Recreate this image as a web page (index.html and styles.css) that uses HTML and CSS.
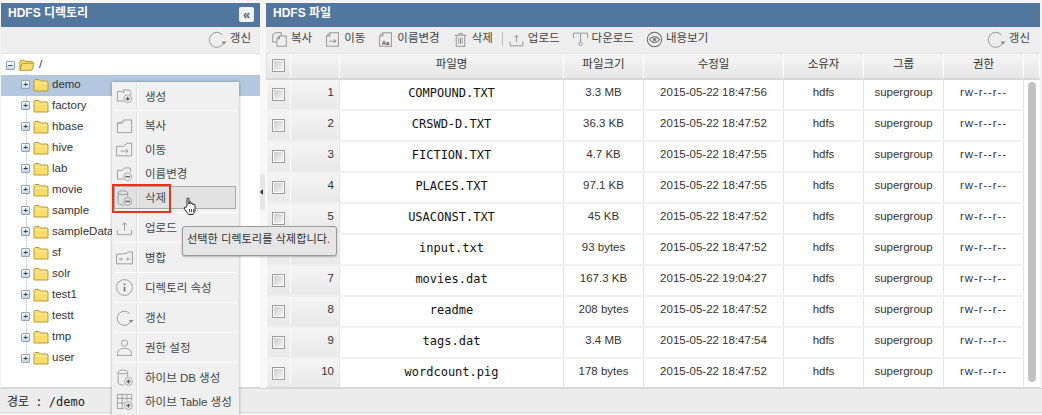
FILE: index.html
```html
<!DOCTYPE html>
<html lang="ko">
<head>
<meta charset="utf-8">
<title>HDFS</title>
<link rel="stylesheet" href="styles.css">
</head>
<body>
<svg class="defs" width="0" height="0">
  <defs>
    <symbol id="refresh" viewBox="0 0 20 20"><path d="M15.5 6A7.5 7.5 0 1 0 17 13" /><path d="M14.5 12.5h5l-2.500 3z" class="fill"/></symbol>
    <symbol id="fplus" viewBox="0 0 24 24"><path d="M3 19V7h6l2 2V5h7l2 3v3M3 19h8"/><circle cx="16" cy="16" r="5" class="soft"/><path d="M13.500 16h5M16 13.500v5" class="bold"/></symbol>
    <symbol id="folder" viewBox="0 0 24 24"><path d="M3 21V9l5-1 3-3h10v16z"/><path d="M3 9h6l3-3"/></symbol>
    <symbol id="fmove" viewBox="0 0 24 24"><path d="M2 20V8h9l4-4h6v16z"/><path d="M7 14h9M13.500 11.500l3 2.500-3 2.500"/></symbol>
    <symbol id="fminus" viewBox="0 0 24 24"><path d="M3 19V8h6l3-3h7l1 5M3 19h8"/><circle cx="16" cy="16" r="5" class="soft"/><path d="M13 16h6" class="bold"/></symbol>
    <symbol id="dbminus" viewBox="0 0 24 24"><ellipse cx="10" cy="6" rx="6" ry="2.500"/><path d="M4 6v13c0 1.500 3 2.500 7 2.500M16 6v5"/><circle cx="16" cy="17" r="5" class="soft"/><path d="M13 17h6" class="bold"/></symbol>
    <symbol id="dbplus" viewBox="0 0 24 24"><ellipse cx="10" cy="5" rx="6" ry="2.500"/><path d="M4 5v14c0 1.500 3 2.500 7 2.500M16 5v6"/><circle cx="17" cy="17" r="5" class="soft"/><path d="M14.500 17h5M17 14.500v5" class="bold"/></symbol>
    <symbol id="upload" viewBox="0 0 24 24"><path d="M3 15v6h18v-6"/><path d="M12 16V6M9 9l3-3 3 3"/></symbol>
    <symbol id="download" viewBox="0 0 24 24"><path d="M2 10V3h20v7"/><path d="M12 4v12"/><circle cx="12" cy="18" r="2.500"/></symbol>
    <symbol id="merge" viewBox="0 0 24 24"><path d="M2 20V8l12-1 3-2h5v15z"/><path d="M5 14h4M15 14h4M7.500 12l2 2-2 2M16.500 12l-2 2 2 2"/></symbol>
    <symbol id="info" viewBox="0 0 24 24"><circle cx="12" cy="12" r="10"/><path d="M12 11v6" class="bold"/><path d="M12 7v2" class="bold"/></symbol>
    <symbol id="person" viewBox="0 0 24 24"><circle cx="12" cy="6.500" r="4"/><path d="M3 22c0-7 4-9 9-9s9 2 9 9z"/></symbol>
    <symbol id="gridplus" viewBox="0 0 24 24"><path d="M3 3h18v8M3 3v18h8M3 8h18M3 14h9M9 3v18M15 3v8"/><circle cx="17" cy="17" r="5" class="soft"/><path d="M14.500 17h5M17 14.500v5" class="bold"/></symbol>
    <symbol id="copy" viewBox="0 0 20 20"><path d="M6 13H2V5l3-3h7v4"/><path d="M7 18V9l3-3h8v12z"/><path d="M7 9h3V6"/></symbol>
    <symbol id="fileto" viewBox="0 0 20 20"><path d="M3 18V6l4-4h10v16z"/><path d="M3 6h4V2M6 12h8M11.500 10l2.500 2-2.500 2"/></symbol>
    <symbol id="fileaa" viewBox="0 0 20 20"><path d="M3 18V6l4-4h10v16z"/><path d="M3 6h4V2"/><text x="5.500" y="16" class="aa">Aa</text></symbol>
    <symbol id="trash" viewBox="0 0 20 20"><path d="M3 5h14M8 5V3h4v2M5 5v13h10V5M8 8v7M10 8v7M12 8v7"/></symbol>
    <symbol id="eye" viewBox="0 0 20 20"><circle cx="10" cy="10" r="8.500"/><path d="M4 10c3-4.500 9-4.500 12 0-3 4.500-9 4.500-12 0z"/><circle cx="10" cy="10" r="2.200" class="fill"/></symbol>
    <symbol id="tfolder" viewBox="0 0 16 14"><path d="M1 13V2.500L2 1.500h4l1.500 1.500H14l1 1v9z" class="yellow"/><path d="M2 5h12" class="yline"/></symbol>
    <symbol id="topen" viewBox="0 0 18 14"><path d="M1 13V2.500L2 1.500h4l1.500 1.500H15v2" class="yellow"/><path d="M1 13l2.500-8H17l-2.500 8z" class="yellow"/></symbol>
    <symbol id="cursor" viewBox="0 0 16 20"><path d="M5 10V3c0-1.500 2-1.500 2 0v5V6.500c0-1 2-1 2 0V8c0-1 2-1 2 0v1c0-1 2-1 2 0v5c0 2-1 3-2 4.500H6.500L2.500 13c-1-1.500.5-2.500 1.500-1.500z" class="hand"/><path d="M7.500 13v3M9.500 13v3M11.500 13v3" class="handl"/></symbol>
  </defs>
</svg>

<div class="app">
  <div class="panes">
    <section class="pane left">
      <header class="head"><h2>HDFS 디렉토리</h2><button class="collapse" type="button">«</button></header>
      <div class="tools end"><span class="tool"><svg class="ic i20"><use href="#refresh"/></svg>갱신</span></div>
      <div class="tree">
        <div class="root"><span class="pm">−</span><svg class="openf"><use href="#topen"/></svg><span>/</span></div>
        <ul>
          <li class="on"><span class="pm">+</span><svg class="fold"><use href="#tfolder"/></svg>demo</li>
          <li><span class="pm">+</span><svg class="fold"><use href="#tfolder"/></svg>factory</li>
          <li><span class="pm">+</span><svg class="fold"><use href="#tfolder"/></svg>hbase</li>
          <li><span class="pm">+</span><svg class="fold"><use href="#tfolder"/></svg>hive</li>
          <li><span class="pm">+</span><svg class="fold"><use href="#tfolder"/></svg>lab</li>
          <li><span class="pm">+</span><svg class="fold"><use href="#tfolder"/></svg>movie</li>
          <li><span class="pm">+</span><svg class="fold"><use href="#tfolder"/></svg>sample</li>
          <li><span class="pm">+</span><svg class="fold"><use href="#tfolder"/></svg>sampleData</li>
          <li><span class="pm">+</span><svg class="fold"><use href="#tfolder"/></svg>sf</li>
          <li><span class="pm">+</span><svg class="fold"><use href="#tfolder"/></svg>solr</li>
          <li><span class="pm">+</span><svg class="fold"><use href="#tfolder"/></svg>test1</li>
          <li><span class="pm">+</span><svg class="fold"><use href="#tfolder"/></svg>testt</li>
          <li><span class="pm">+</span><svg class="fold"><use href="#tfolder"/></svg>tmp</li>
          <li><span class="pm">+</span><svg class="fold"><use href="#tfolder"/></svg>user</li>
        </ul>
      </div>
    </section>
    <div class="split"><span class="grip"></span></div>
    <section class="pane right">
      <header class="head"><h2>HDFS 파일</h2></header>
      <div class="tools">
        <span class="tool"><svg class="ic i17"><use href="#copy"/></svg>복사</span>
        <span class="tool"><svg class="ic i17"><use href="#fileto"/></svg>이동</span>
        <span class="tool"><svg class="ic i17"><use href="#fileaa"/></svg>이름변경</span>
        <span class="tool"><svg class="ic i17"><use href="#trash"/></svg>삭제</span>
        <span class="bar"></span>
        <span class="tool"><svg class="ic i17"><use href="#upload"/></svg>업로드</span>
        <span class="tool"><svg class="ic i17"><use href="#download"/></svg>다운로드</span>
        <span class="tool"><svg class="ic i17 dark"><use href="#eye"/></svg>내용보기</span>
        <span class="tool push"><svg class="ic i20"><use href="#refresh"/></svg>갱신</span>
      </div>
      <div class="grid-wrap">
        <table class="grid">
          <colgroup><col class="c-chk"><col class="c-no"><col class="c-name"><col class="c-size"><col class="c-date"><col class="c-own"><col class="c-grp"><col class="c-perm"><col class="c-sb"></colgroup>
          <thead><tr><th><span class="cb"></span></th><th></th><th>파일명</th><th>파일크기</th><th>수정일</th><th>소유자</th><th>그룹</th><th>권한</th><th></th></tr></thead>
          <tbody>
            <tr><td class="g"><span class="cb"></span></td><td class="g no">1</td><td class="fn">COMPOUND.TXT</td><td>3.3 MB</td><td>2015-05-22 18:47:56</td><td>hdfs</td><td>supergroup</td><td>rw-r--r--</td><td class="sb" rowspan="10"><span class="thumb"></span></td></tr>
            <tr><td class="g"><span class="cb"></span></td><td class="g no">2</td><td class="fn">CRSWD-D.TXT</td><td>36.3 KB</td><td>2015-05-22 18:47:52</td><td>hdfs</td><td>supergroup</td><td>rw-r--r--</td></tr>
            <tr><td class="g"><span class="cb"></span></td><td class="g no">3</td><td class="fn">FICTION.TXT</td><td>4.7 KB</td><td>2015-05-22 18:47:55</td><td>hdfs</td><td>supergroup</td><td>rw-r--r--</td></tr>
            <tr><td class="g"><span class="cb"></span></td><td class="g no">4</td><td class="fn">PLACES.TXT</td><td>97.1 KB</td><td>2015-05-22 18:47:55</td><td>hdfs</td><td>supergroup</td><td>rw-r--r--</td></tr>
            <tr><td class="g"><span class="cb"></span></td><td class="g no">5</td><td class="fn">USACONST.TXT</td><td>45 KB</td><td>2015-05-22 18:47:52</td><td>hdfs</td><td>supergroup</td><td>rw-r--r--</td></tr>
            <tr><td class="g"><span class="cb"></span></td><td class="g no">6</td><td class="fn">input.txt</td><td>93 bytes</td><td>2015-05-22 18:47:52</td><td>hdfs</td><td>supergroup</td><td>rw-r--r--</td></tr>
            <tr><td class="g"><span class="cb"></span></td><td class="g no">7</td><td class="fn">movies.dat</td><td>167.3 KB</td><td>2015-05-22 19:04:27</td><td>hdfs</td><td>supergroup</td><td>rw-r--r--</td></tr>
            <tr><td class="g"><span class="cb"></span></td><td class="g no">8</td><td class="fn">readme</td><td>208 bytes</td><td>2015-05-22 18:47:52</td><td>hdfs</td><td>supergroup</td><td>rw-r--r--</td></tr>
            <tr><td class="g"><span class="cb"></span></td><td class="g no">9</td><td class="fn">tags.dat</td><td>3.4 MB</td><td>2015-05-22 18:47:54</td><td>hdfs</td><td>supergroup</td><td>rw-r--r--</td></tr>
            <tr><td class="g"><span class="cb"></span></td><td class="g no">10</td><td class="fn">wordcount.pig</td><td>178 bytes</td><td>2015-05-22 18:47:52</td><td>hdfs</td><td>supergroup</td><td>rw-r--r--</td></tr>
          </tbody>
        </table>
      </div>
    </section>
  </div>
  <footer class="status">경로 : /demo</footer>

  <nav class="menu">
    <div class="mi first"><svg class="mic"><use href="#fplus"/></svg><span>생성</span></div>
    <hr>
    <div class="group">
      <div class="mi"><svg class="mic"><use href="#folder"/></svg><span>복사</span></div>
      <div class="mi"><svg class="mic"><use href="#fmove"/></svg><span>이동</span></div>
      <div class="mi"><svg class="mic"><use href="#fminus"/></svg><span>이름변경</span></div>
      <div class="mi hover"><svg class="mic"><use href="#dbminus"/></svg><span>삭제</span></div>
    </div>
    <hr>
    <div class="mi solo"><svg class="mic"><use href="#upload"/></svg><span>업로드</span></div>
    <hr>
    <div class="mi solo"><svg class="mic"><use href="#merge"/></svg><span>병합</span></div>
    <hr>
    <div class="mi solo"><svg class="mic"><use href="#info"/></svg><span>디렉토리 속성</span></div>
    <hr>
    <div class="mi solo"><svg class="mic"><use href="#refresh"/></svg><span>갱신</span></div>
    <hr>
    <div class="mi solo"><svg class="mic"><use href="#person"/></svg><span>권한 설정</span></div>
    <hr>
    <div class="group last">
      <div class="mi"><svg class="mic"><use href="#dbplus"/></svg><span>하이브 DB 생성</span></div>
      <div class="mi"><svg class="mic"><use href="#gridplus"/></svg><span>하이브 Table 생성</span></div>
    </div>
  </nav>
  <div class="redbox"></div>
  <svg class="cursor"><use href="#cursor"/></svg>
  <div class="tip">선택한 디렉토리를 삭제합니다.</div>
</div>
</body>
</html>
```
FILE: styles.css
```css
* { box-sizing: border-box; }
html, body { margin: 0; padding: 0; }
body {
  width: 1042px; height: 415px; overflow: hidden; background: #f4f4f4;
  font: 11.5px/1.2 "Liberation Sans", "Noto Sans CJK KR", sans-serif; color: #333;
}
.defs { position: absolute; }
symbol * { vector-effect: non-scaling-stroke; }
.app { position: relative; width: 1042px; height: 415px; padding-top: 2px; overflow: hidden; }
.panes { display: flex; height: 386px; padding: 0 2px 0 1px; }
.pane { display: flex; flex-direction: column; background: #fff; border-bottom: 1px solid #d8d8d8; }
.left { width: 259px; }
.right { flex: 1; min-width: 0; }
.split { width: 6px; position: relative; background: #f7f7f7; }
.grip {
  position: absolute; left: 0; top: 172px; width: 5px; height: 36px; background: #e6e6e6;
  border-radius: 0 3px 3px 0;
}
.grip::after {
  content: ""; position: absolute; left: 0; top: 15px; border: 3px solid transparent;
  border-right-color: #333; border-left-width: 0;
}
.head {
  height: 24px; background: #52779f; display: flex; align-items: center; justify-content: space-between;
  padding: 0 6px 0 7px; flex: none; margin-top: 1px;
}
.head h2 { margin: 0; color: #fff; font-size: 12px; font-weight: 700; position: relative; top: -2px; }
.collapse {
  width: 15px; height: 15px; padding: 0; border: 0; border-radius: 2px; background: #f2f2f2; color: #4a5d75;
  font: 700 13px/13px "Liberation Sans", sans-serif; position: relative; top: -1px;
}
.tools {
  height: 27px; flex: none; background: #eeeeee; border-bottom: 1px solid #e2e2e2;
  display: flex; align-items: center; gap: 12px; padding: 0 10px 2px 5px; color: #444; font-size: 11.5px;
}
.tools.end { justify-content: flex-end; padding-right: 9px; }
.tool { display: inline-flex; align-items: center; gap: 3px; white-space: nowrap; }
.tool.push { margin-left: auto; }
.bar { width: 1px; height: 14px; background: #bbb; margin: 0 -7px 0 -3px; }
.ic, .mic { fill: none; stroke: #999; stroke-width: 1; flex: none; }
.i20 { width: 20px; height: 20px; }
.i17 { width: 17px; height: 17px; }
.dark { stroke: #666; }
.fill { fill: #888; stroke: none; }
.soft { fill: #f0f0f0; stroke: #aaa; }
.bold { stroke: #666; stroke-width: 1.500; }
.aa { fill: #444; stroke: none; font: 700 7px "Liberation Sans", sans-serif; }

.tree { flex: 1; position: relative; padding-top: 1px; font-size: 11.5px; color: #333; }
.tree::before {
  content: ""; position: absolute; left: 25px; top: 20px; height: 285px;
  border-left: 1px dotted #b8c4d0;
}
.root { height: 20px; display: flex; align-items: center; padding-left: 5px; gap: 1px; position: relative; }
.tree ul { list-style: none; margin: 0; padding: 0; position: relative; }
.tree li { height: 21.050px; display: flex; align-items: center; padding-left: 20px; padding-bottom: 2px; }
.tree li.on { background: #b3c8de; }
.pm {
  width: 9px; height: 9px; flex: none; border: 1px solid #8ea4bd; border-radius: 1px;
  background: linear-gradient(#fff, #c8d6e6); color: #26415f; font: 700 8px/7px "Liberation Sans", sans-serif; text-align: center;
  margin-right: 3px;
}
.fold { width: 16px; height: 14px; margin-right: 3px; flex: none; }
.openf { width: 16px; height: 14px; margin-right: 3px; flex: none; }
.yellow { fill: #fbdc6a; stroke: #b89a3c; stroke-width: 1; }
.yline { stroke: #fff2b0; fill: none; }

.grid-wrap { flex: 1; overflow: hidden; }
.grid { border-collapse: collapse; table-layout: fixed; width: 773px; font-size: 11.5px; }
.c-chk { width: 24px; } .c-no { width: 49px; } .c-name { width: 224px; } .c-size { width: 80px; }
.c-date { width: 140px; } .c-own { width: 80px; } .c-grp { width: 80px; } .c-perm { width: 80px; } .c-sb { width: 16px; }
.grid th {
  height: 25px; font-weight: 400; color: #333; padding: 0 0 2px; text-align: center;
  background: linear-gradient(#f5f5f5, #e6e6e6); border-right: 1px solid #fff; border-left: 1px solid #e0e0e0;
  border-bottom: 2px solid #d8d8d8;
}
.grid td {
  height: 31px; padding: 0 0 3px; text-align: center; border-right: 1px solid #e4e4e4; border-bottom: 2px solid #f0f0f0; color: #333; overflow: hidden; white-space: nowrap;
}
.grid td.g { background: linear-gradient(#f4f4f4, #e9e9e9); border-right: 1px solid #fff; padding: 0; }
.grid td.g.no { text-align: right; padding: 0 5px 3px 0; border-right-color: #e4e4e4; }
.grid td.fn { font: 12px "DejaVu Sans Mono", monospace; color: #111; }
.grid tbody td:nth-child(8) { letter-spacing: .9px; }
.grid td.sb { padding: 2px 2px 0 4px; vertical-align: top; border: 0; background: #fff; border-left: 1px solid #e4e4e4; }
.thumb { display: block; width: 8px; height: 300px; background: #c2c2c2; border-radius: 4px; }
.cb {
  display: inline-block; width: 13px; height: 13px; border: 1px solid #9c9c9c;
  background: linear-gradient(135deg, #c8c8c8, #f8f8f8); box-shadow: inset 0 0 0 1px #fff; vertical-align: middle;
}
.status {
  height: 25px; margin-top: 0; background: #ececec; border-top: 1px solid #d8d8d8; border-bottom: 1px solid #d8d8d8;
  padding: 3px 0 0 7px; font: 12px "DejaVu Sans Mono", "Noto Sans CJK KR", monospace; color: #222; word-spacing: -1px;
}

.menu {
  position: absolute; left: 112px; top: 82px; width: 127px; height: 340px; background: #f0f0f0;
  box-shadow: 0 0 3px rgba(0,0,0,.35); padding-top: 1px; font-size: 11.5px; color: #444;
}
.menu::before {
  content: ""; position: absolute; left: 24px; top: 0; bottom: 0; width: 2px;
  background: linear-gradient(90deg, #e0e0e0 50%, #fff 50%);
}
.menu hr { position: relative; margin: 0 2px 0 3px; height: 1px; border: 0; background: #fff; }
.mi { height: 24px; display: flex; align-items: center; padding-left: 3px; position: relative; }
.mi span { margin-left: 11px; padding-top: 4px; }
.mic { width: 19px; height: 19px; stroke: #a0a0a0; }
.mi.first { height: 27px; padding-bottom: 2px; }
.mi.solo { height: 29px; padding-bottom: 1px; }
.group { padding: 2px 0 3px; }
.group.last { padding-bottom: 0; }
.mi.hover::after {
  content: ""; position: absolute; left: 2px; right: 3px; top: 1px; bottom: 0;
  border: 1px solid #aaa; background: rgba(120,120,120,.12);
}
.redbox { position: absolute; left: 112px; top: 184px; width: 59px; height: 29px; border: 2px solid #e8341c; }
.cursor { position: absolute; left: 182px; top: 196px; width: 16px; height: 20px; }
.hand { fill: #fff; stroke: #222; stroke-width: 1; }
.handl { stroke: #222; stroke-width: .8; fill: none; }
.tip {
  position: absolute; left: 182px; top: 226px; width: 155px; height: 30px; padding: 6px 0 0 4px;
  background: #e6e6e6; border: 1px solid #999; border-radius: 3px; font-size: 11.2px; color: #333; white-space: nowrap;
  box-shadow: 0 1px 2px rgba(0,0,0,.25);
}
```
